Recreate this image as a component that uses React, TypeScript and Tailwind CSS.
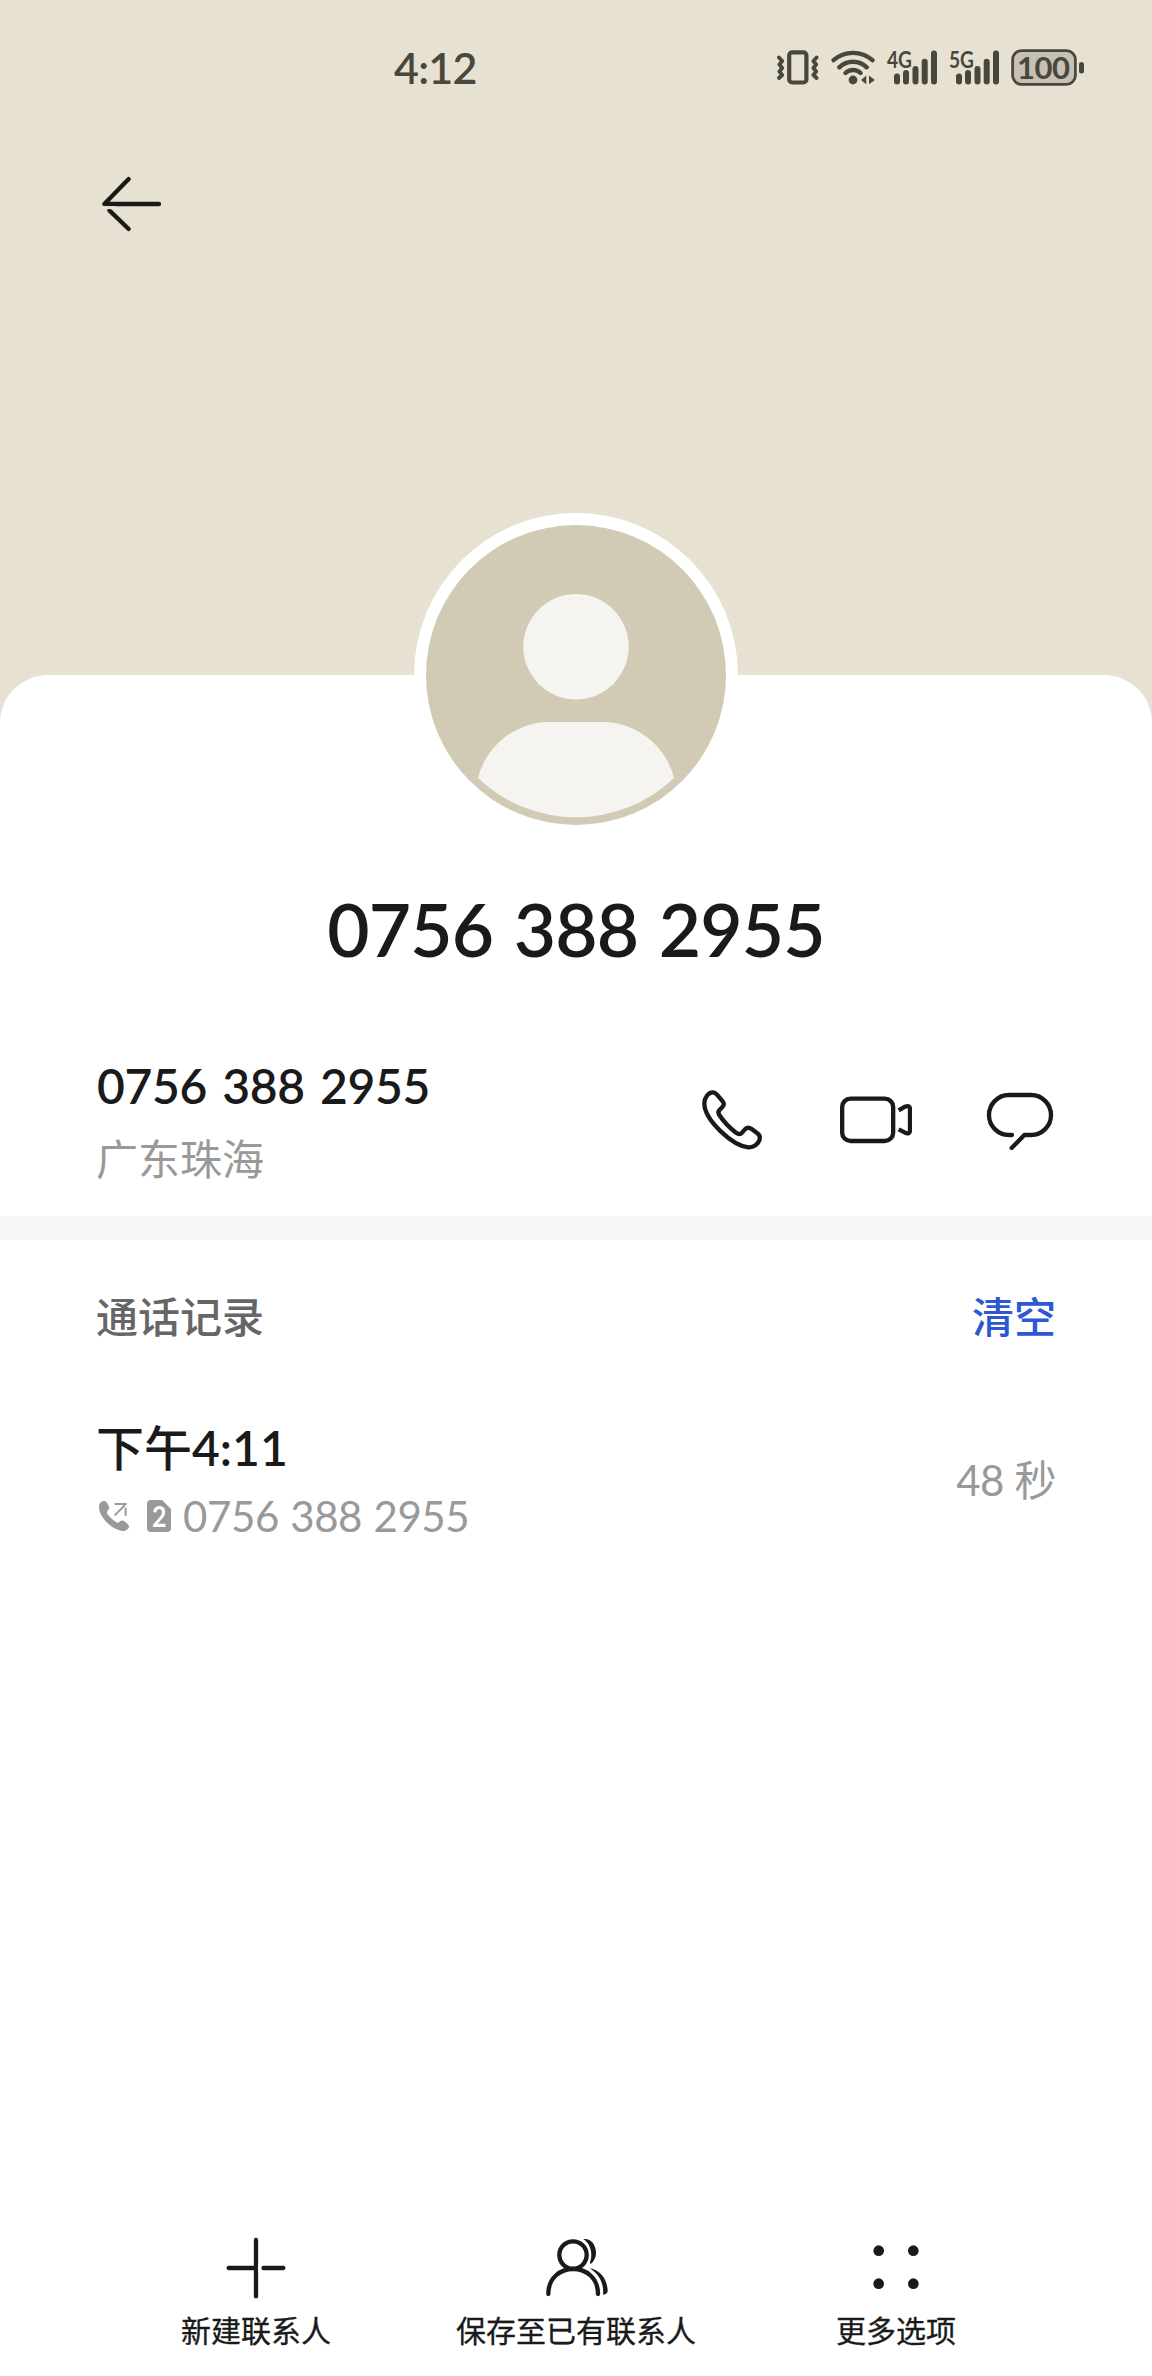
import type { ReactNode } from "react";

const phoneNumber = "0756 388 2955";

function VibrateIcon() {
  return (
    <svg width="43" height="36" viewBox="0 0 43 36" fill="none" stroke="currentColor">
      <rect x="12.2" y="3.3" width="17.2" height="30.2" rx="3" strokeWidth="4.2" />
      <path
        d="M2 8.5 5.2 12 2.4 15.5 5.2 19 2.4 22.5 5.2 26 2 29M39.6 8.5 36.4 12 39.2 15.5 36.4 19 39.2 22.5 36.4 26 39.6 29"
        strokeWidth="3.8"
        strokeLinecap="round"
        strokeLinejoin="round"
      />
    </svg>
  );
}

function WifiIcon() {
  return (
    <svg width="45" height="36" viewBox="0 0 45 36" fill="none" stroke="currentColor">
      <path
        d="M2.6 11.2C13.5 1.4 30.5 1.4 41.4 11.2M8.3 18.3C16 10.8 28 10.8 35.7 18.3M14.5 24C18.7 20 25.3 20 29.5 24"
        strokeWidth="4.4"
        strokeLinecap="round"
      />
      <circle cx="22" cy="31" r="4.4" fill="currentColor" stroke="none" />
      <path d="M30 31 35.3 26.5V35.3ZM43.8 31 38 26.5V35.3Z" fill="currentColor" stroke="none" />
    </svg>
  );
}

function SignalIcon({ label }: { label: string }) {
  return (
    <svg className="overflow-visible" width="50" height="36" viewBox="0 0 50 36" fill="currentColor">
      <text
        x="0"
        y="18.6"
        fontSize="22.5"
        textLength="25"
        lengthAdjust="spacingAndGlyphs"
        className="font-bold"
      >
        {label}
      </text>
      <rect x="7" y="24.5" width="6" height="11" rx="3" />
      <rect x="16" y="21" width="6" height="14.5" rx="3" />
      <rect x="25.5" y="17" width="6" height="18.5" rx="3" />
      <rect x="34.7" y="9.7" width="6" height="25.8" rx="3" />
      <rect x="44" y="1.5" width="6" height="34" rx="3" />
    </svg>
  );
}

function BatteryIcon() {
  return (
    <svg className="overflow-visible" width="74" height="37" viewBox="0 0 74 37">
      <rect x="1.6" y="1.6" width="62.8" height="33.8" rx="9" fill="#c6c1b3" stroke="currentColor" strokeWidth="2.7" />
      <rect x="68" y="13" width="5" height="11.5" rx="2.5" fill="currentColor" />
      <text x="6" y="29.7" fontSize="31" textLength="53" fill="currentColor" className="font-bold">
        100
      </text>
    </svg>
  );
}

function LineIcon({ children }: { children: ReactNode }) {
  return (
    <svg
      width="72"
      height="72"
      viewBox="0 0 216 216"
      fill="none"
      stroke="currentColor"
      strokeWidth="13"
      strokeLinecap="round"
      strokeLinejoin="round"
    >
      {children}
    </svg>
  );
}

function Avatar() {
  return (
    <svg className="mx-auto -mt-[162px] block" width="324" height="324" viewBox="0 0 324 324">
      <circle cx="162" cy="162" r="162" fill="#fff" />
      <circle cx="162" cy="162" r="150" fill="#d1cab5" />
      <circle cx="162" cy="133.7" r="52.7" fill="#f5f4f0" />
      <path d="M64 265A74 74 0 0 1 135 209H189A74 74 0 0 1 260 265A142 142 0 0 1 64 265Z" fill="#f5f4f0" />
    </svg>
  );
}

function OutgoingCallIcon() {
  return (
    <svg width="30" height="30" viewBox="0 0 90 90" fill="currentColor">
      <path d="M0 18C0 6 8 0 15 0C20 0 23 4 26 9L29 15C32 21 30 25 26 29C23 32 23 35 26 40C33 50 42 58 52 64C56 66 59 66 62 62C66 58 71 57 76 61L85 68C90 72 91 76 89 80C85 87 78 90 70 90C43 88 0 51 0 18Z" />
      <path d="M47 9H83M47 43 78 12M80 20V44" fill="none" stroke="currentColor" strokeWidth="6" />
    </svg>
  );
}

function SimIcon() {
  return (
    <svg className="overflow-visible" width="24" height="32" viewBox="0 0 24 32">
      <path d="M4 0H15L24 9V28Q24 32 20 32H4Q0 32 0 28V4Q0 0 4 0Z" fill="currentColor" />
      <text x="5" y="26.5" fontSize="28" textLength="14.5" lengthAdjust="spacingAndGlyphs" fill="#fff" className="font-bold">
        2
      </text>
    </svg>
  );
}

function Action({ label, children }: { label: string; children: ReactNode }) {
  return (
    <button className="flex flex-col items-center">
      <LineIcon>{children}</LineIcon>
      <span className="mt-1.5 text-[30px] leading-[40px] whitespace-nowrap [-webkit-text-stroke:0.3px]">{label}</span>
    </button>
  );
}

export default function App() {
  return (
    <div className="flex h-[2376px] w-[1152px] flex-col bg-[#e7e1d2] font-['Lato','Noto_Sans_CJK_SC',sans-serif] text-[#1a1a1a]">
      <header className="h-[675px] shrink-0">
        <div className="flex h-[134px] items-center pr-[67px] pl-[394px] text-[#49463c]">
          <span className="text-[43px] leading-none font-semibold tracking-[-0.8px]">4:12</span>
          <div className="ml-auto flex items-center">
            <VibrateIcon />
            <span className="ml-[11px]"><WifiIcon /></span>
            <span className="ml-[11px]"><SignalIcon label="4G" /></span>
            <span className="ml-3"><SignalIcon label="5G" /></span>
            <span className="ml-3"><BatteryIcon /></span>
          </div>
        </div>
        <button className="mt-[34px] ml-24 block" aria-label="返回">
          <LineIcon>
            <path d="M189 108H25L98 33" />
            <path d="M40 127 98 183" />
            <path d="M24 119H60" stroke="#e7e1d2" strokeWidth="9" strokeLinecap="butt" />
          </LineIcon>
        </button>
      </header>

      <main className="flex grow flex-col rounded-t-[48px] bg-white">
        <Avatar />
        <h1 className="mt-[52px] text-center text-[73px] leading-[80px] font-semibold tracking-[-0.8px] [word-spacing:3px]">
          {phoneNumber}
        </h1>

        <section className="mt-[88px] flex items-center justify-between px-24">
          <div>
            <p className="pt-px pl-px text-[48px] leading-[56px] font-semibold tracking-[-0.3px] [word-spacing:3.4px]">
              {phoneNumber}
            </p>
            <p className="mt-[15px] text-[42px] leading-[60px] text-[#999]">广东珠海</p>
          </div>
          <div className="flex gap-[72px]">
            <button aria-label="拨打">
              <LineIcon>
                <path d="M25 49C25 33 37 16 50 16C57 16 60 19 65 25L80 43C85 49 85 53 80 59L71 68C66 73 66 78 70 84C85 107 103 124 120 137C127 142 133 142 138 137L147 127C153 121 160 121 167 126L184 139C191 144 193 150 191 157C187 172 173 182 157 181C110 176 25 100 25 49Z" />
              </LineIcon>
            </button>
            <button aria-label="视频通话">
              <LineIcon>
                <rect x="6.5" y="35" width="153" height="127" rx="25" />
                <path d="M176 70 195 59Q210 53 210 67V129Q210 143 195 137L176 127" strokeLinecap="butt" />
              </LineIcon>
            </button>
            <button aria-label="短信">
              <LineIcon>
                <path d="M84 144H75A60 60 0 0 1 75 24H141A60 60 0 0 1 141 144H121L83 183" />
              </LineIcon>
            </button>
          </div>
        </section>

        <div className="mt-[27px] h-6 bg-[#f6f6f6]" />

        <section className="px-24 pt-[47px]">
          <div className="flex justify-between text-[42px] leading-[60px] font-medium">
            <h2 className="text-[#666]">通话记录</h2>
            <button className="text-[#2d58d1]">清空</button>
          </div>
          <div className="mt-[69px] flex items-center justify-between">
            <div>
              <p className="text-[48px] leading-[64px] font-medium">
                下午<span className="font-semibold">4:11</span>
              </p>
              <div className="mt-3 flex h-12 items-center pl-[3px] text-[42px] leading-[48px] text-[#999]">
                <OutgoingCallIcon />
                <span className="ml-[18px]"><SimIcon /></span>
                <span className="ml-3 tracking-[-0.4px] [word-spacing:1px]">{phoneNumber}</span>
              </div>
            </div>
            <span className="pt-1 text-[42px] leading-[60px] tracking-[-0.4px] text-[#999]">48 秒</span>
          </div>
        </section>

        <footer className="mt-auto grid grid-cols-3 px-24 pb-[26px]">
          <Action label="新建联系人">
            <path d="M108 24V193M26 108H104M190 108H130" />
            <path d="M119 97V119" stroke="#fff" strokeWidth="10" strokeLinecap="butt" />
          </Action>
          <Action label="保存至已有联系人">
            <circle cx="99" cy="69" r="41" />
            <path d="M25 186C25 86 174 86 174 186" />
            <path
              d="M130 21C153 18 168 38 168 62C168 76 161 90 151 96C150 94 149 91 151 88C158 67 153 36 130 21ZM149 109C180 114 202 141 203 176Q203 186 189 188C192 158 181 129 149 109Z"
              fill="currentColor"
              stroke="none"
            />
          </Action>
          <Action label="更多选项">
            <g fill="currentColor" stroke="none">
              <circle cx="56" cy="56" r="16" />
              <circle cx="160" cy="56" r="16" />
              <circle cx="56" cy="155" r="16" />
              <circle cx="160" cy="155" r="16" />
            </g>
          </Action>
        </footer>
      </main>
    </div>
  );
}
